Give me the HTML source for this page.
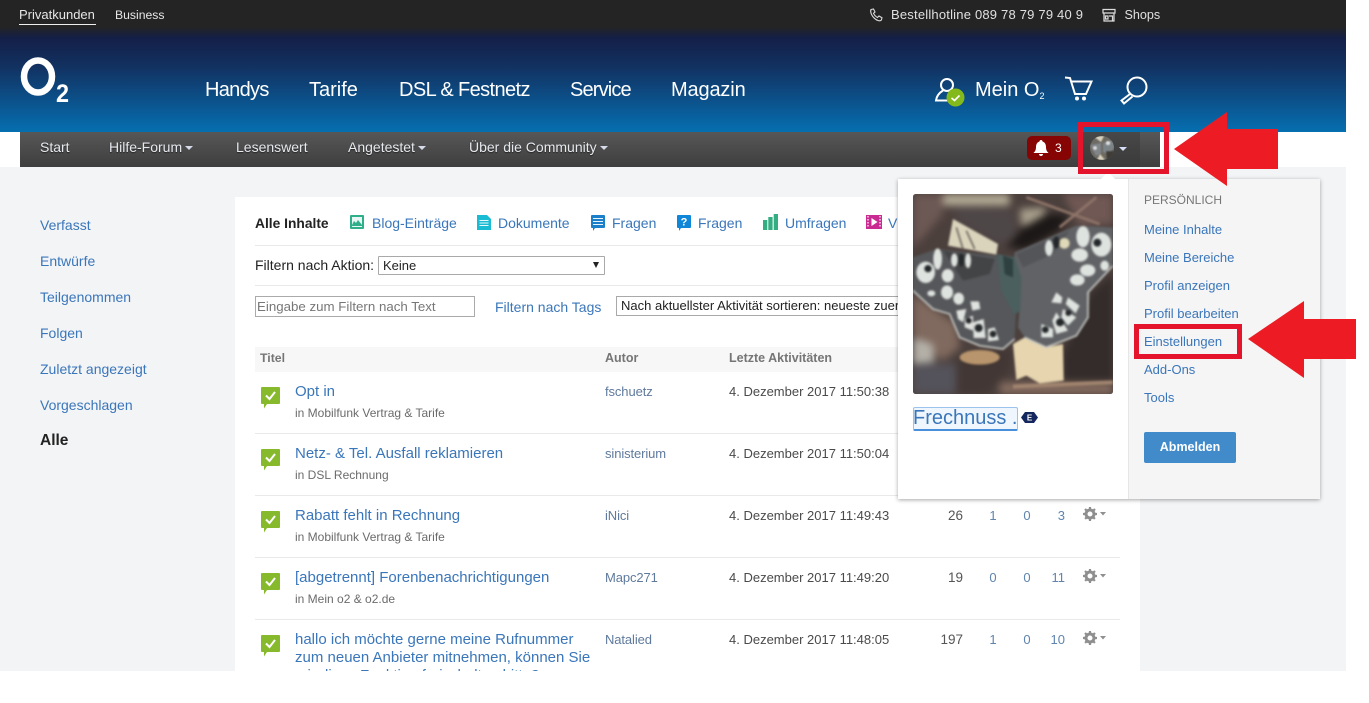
<!DOCTYPE html>
<html lang="de"><head><meta charset="utf-8"><title>O2 Community</title>
<style>
html,body{margin:0;padding:0;background:#fff}
body{position:relative;width:1369px;height:703px;overflow:hidden;font-family:"Liberation Sans",sans-serif}
.t{position:absolute;white-space:nowrap;line-height:20px;height:20px}
.a{position:absolute}
.l{color:#3a76ba}
.w{color:#fff}
.ti{font-size:15px;color:#3a76ba}
.sub{font-size:12px;color:#6b6b6b}
.au{font-size:13px;color:#5f7a9c;letter-spacing:-.1px}
.dt{font-size:13px;color:#4a4a4a}
.n{font-size:13.5px;color:#555;text-align:right;width:30px}
.n2{font-size:13px;color:#5f84ae;text-align:center;width:24px}
.n3{font-size:13px;color:#5f84ae;text-align:right;width:24px}
.hr{position:absolute;left:20px;width:865px;height:1px;background:#e9e9e9}
.m{font-size:13px;color:#3a76ba}
.s{font-size:14px;color:#e6e9ee;text-shadow:0 1px 1px #222}
.side{font-size:14px;color:#3a76ba}
.c{display:inline-block;width:0;height:0;border:4px solid transparent;border-top-color:#d5dbe8;border-bottom:0;margin-left:3px;vertical-align:2px}
svg{position:absolute;display:block;overflow:visible}
</style></head><body>

<!-- header -->
<div class="a" style="left:0;top:0;width:1346px;height:132px;background:linear-gradient(#242424 0,#242424 27px,#141f48 38px,#12305f 65px,#0a5a96 110px,#066fb0 132px)"></div>
<div class="t" style="left:19px;top:5px;font-size:13px;color:#e6e6e6">Privatkunden</div>
<div class="a" style="left:19px;top:24px;width:77px;height:1px;background:#eee"></div>
<div class="t" style="left:115px;top:5px;font-size:12.2px;color:#e6e6e6">Business</div>

<svg style="left:869px;top:8px" width="14" height="14" viewBox="0 0 14 14" fill="none" stroke="#ddd" stroke-width="1.1"><path d="M2 1.5 4.5 1 6 4 4.5 5.3C5.3 7 6.8 8.6 8.5 9.5L10 8l3 1.8-.6 2.2C11 13.5 8 12.8 5.3 10.2 2.5 7.5 1 4 2 1.500Z"/></svg>
<div class="t" style="left:891px;top:5px;font-size:13px;color:#e0e0e0;letter-spacing:.2px">Bestellhotline 089 78 79 79 40 9</div>
<svg style="left:1102px;top:8px" width="14" height="14" viewBox="0 0 14 14" fill="none" stroke="#ddd" stroke-width="1.2"><path d="M1 1.5h12v3.500H1zM2 5v8h10V5M7 8h3.500v5M3.500 8H6v3H3.500z"/></svg>
<div class="t" style="left:1124.5px;top:5px;font-size:12.6px;color:#e0e0e0">Shops</div>

<!-- logo -->
<svg style="left:20px;top:55px" width="52" height="50" viewBox="0 0 52 50"><ellipse cx="18" cy="21.5" rx="14" ry="16" fill="none" stroke="#fff" stroke-width="6.5"/><text x="36" y="47" font-family="Liberation Sans,sans-serif" font-size="25" font-weight="bold" fill="#fff" textLength="13" lengthAdjust="spacingAndGlyphs">2</text></svg>

<div class="t w" style="left:205px;top:80px;font-size:20px;letter-spacing:-.7px">Handys</div>
<div class="t w" style="left:309px;top:80px;font-size:20px">Tarife</div>
<div class="t w" style="left:399px;top:80px;font-size:20px;letter-spacing:-.6px">DSL &amp; Festnetz</div>
<div class="t w" style="left:570px;top:80px;font-size:20px;letter-spacing:-.85px">Service</div>
<div class="t w" style="left:671px;top:80px;font-size:20px;letter-spacing:-.15px">Magazin</div>

<svg style="left:935px;top:77px" width="30" height="32" viewBox="0 0 30 32" fill="none" stroke="#fff" stroke-width="2"><circle cx="12" cy="8" r="6"/><path d="M8 13.500C4 16 1.500 19.500 1 23.500h15"/><circle cx="20.500" cy="20.500" r="9" fill="#84b91c" stroke="none"/><path d="M16.500 21l3 2.500 5-5" stroke-width="1.600"/></svg>
<div class="t w" style="left:975px;top:80px;font-size:20px">Mein O<span style="font-size:9px;vertical-align:-3px">2</span></div>
<svg style="left:1065px;top:76px" width="28" height="26" viewBox="0 0 28 26" fill="none" stroke="#fff" stroke-width="2"><path d="M0 1.500 5 2 10 18H21L26.500 5.500H5.500"/><circle cx="12" cy="22.500" r="2" fill="#fff" stroke="none"/><circle cx="19" cy="22.500" r="2" fill="#fff" stroke="none"/></svg>
<svg style="left:1120px;top:76px" width="28" height="28" viewBox="0 0 28 28" fill="none" stroke="#fff" stroke-width="2"><circle cx="17" cy="11" r="9.500"/><path d="M10 18 1.500 24.500 4 27.500 12.500 20.500"/></svg>

<!-- subnav -->
<div class="a" style="left:20px;top:132px;width:1140px;height:35px;background:linear-gradient(#575757,#3e3e3e)"></div>
<div class="a" style="left:1079px;top:132px;width:61px;height:35px;background:linear-gradient(#484848,#3a3a3a)"></div>
<div class="t s" style="left:40px;top:137px">Start</div>
<div class="t s" style="left:109px;top:137px">Hilfe-Forum<i class="c"></i></div>
<div class="t s" style="left:236px;top:137px">Lesenswert</div>
<div class="t s" style="left:348px;top:137px">Angetestet<i class="c"></i></div>
<div class="t s" style="left:469px;top:137px">Über die Community<i class="c"></i></div>

<div class="a" style="left:1027px;top:136px;width:44px;height:24px;border-radius:5px;background:#860404"></div>
<svg style="left:1033px;top:140px" width="16" height="17" viewBox="0 0 16 17" fill="#fff"><path d="M8 0c1 0 1.500.7 1.500 1.500C12 2.300 13 4.500 13 7c0 3 1 4.500 2.500 6H.5C2 11.500 3 10 3 7c0-2.500 1-4.700 3.500-5.500C6.500.7 7 0 8 0ZM6 14h4c0 1.200-1 2-2 2s-2-.8-2-2Z"/></svg>
<div class="t" style="left:1055px;top:138px;font-size:12px;color:#fff">3</div>

<svg style="left:1090px;top:136px" width="24" height="24" viewBox="0 0 24 24"><defs><clipPath id="av"><circle cx="12" cy="12" r="12"/></clipPath><filter id="ab"><feGaussianBlur stdDeviation=".7"/></filter></defs><g clip-path="url(#av)"><rect width="24" height="24" fill="#6d6a63"/><g filter="url(#ab)"><path d="M0 9 11 7v10l-5 3z" fill="#80868a"/><path d="M13 7 24 4v8l-6 6-5-2z" fill="#7d8488"/><path d="M3 0h11l-3 6zM10 18l5 6H7z" fill="#d9d1bd"/><circle cx="18" cy="7" r="2" fill="#ddd"/><circle cx="5" cy="12" r="1.800" fill="#ddd"/><path d="M16 15h8v9h-7z" fill="#3f3a34"/></g></g></svg>
<div class="a" style="left:1119px;top:147px;width:0;height:0;border:4px solid transparent;border-top-color:#d5dff5;border-bottom:0"></div>

<!-- main area -->
<div class="a" style="left:0;top:167px;width:1346px;height:504px;background:#f3f4f6;overflow:hidden">
  <div class="t side" style="left:40px;top:48px">Verfasst</div>
  <div class="t side" style="left:40px;top:84px">Entwürfe</div>
  <div class="t side" style="left:40px;top:120px">Teilgenommen</div>
  <div class="t side" style="left:40px;top:156px">Folgen</div>
  <div class="t side" style="left:40px;top:192px">Zuletzt angezeigt</div>
  <div class="t side" style="left:40px;top:228px">Vorgeschlagen</div>
  <div class="t" style="left:40px;top:264px;font-size:15.5px;font-weight:bold;color:#222">Alle</div>

  <div class="a" style="left:235px;top:30px;width:905px;height:474px;background:#fff;overflow:hidden">
    <div class="t" style="left:20px;top:16px;font-size:13.8px;font-weight:bold;color:#222;margin-top:.5px">Alle Inhalte</div>

    <svg style="left:115px;top:18px" width="14" height="14" viewBox="0 0 14 14"><rect width="14" height="14" rx="1" fill="#2fae8a"/><rect x="2" y="2" width="10" height="8" fill="#e8f7f3"/><path d="M2 10 4 6l2 2 2-3 4 5z" fill="#2fae8a"/><rect x="2" y="11" width="10" height="1" fill="#e8f7f3"/></svg>
    <div class="t l" style="left:137px;top:16px;font-size:14px">Blog-Einträge</div>

    <svg style="left:242px;top:18px" width="14" height="15" viewBox="0 0 14 15"><path d="M0 0h10l4 4v11H0z" fill="#19bcd2"/><path d="M2.500 5.500h9M2.500 8h9M2.500 10.500h9" stroke="#e6fafd" stroke-width="1"/></svg>
    <div class="t l" style="left:263px;top:16px;font-size:14px">Dokumente</div>

    <svg style="left:356px;top:18px" width="14" height="16" viewBox="0 0 14 16"><path d="M1 0h12a1 1 0 0 1 1 1v11a1 1 0 0 1-1 1H4l-2 3v-3H1a1 1 0 0 1-1-1V1a1 1 0 0 1 1-1Z" fill="#1c7fc9"/><path d="M2 3.500h10M2 6.500h10M2 9.500h10" stroke="#eaf4fb" stroke-width="1"/></svg>
    <div class="t l" style="left:377px;top:16px;font-size:14px">Fragen</div>

    <svg style="left:442px;top:18px" width="14" height="16" viewBox="0 0 14 16"><path d="M1 0h12a1 1 0 0 1 1 1v11a1 1 0 0 1-1 1H4l-2 3v-3H1a1 1 0 0 1-1-1V1a1 1 0 0 1 1-1Z" fill="#0f86d8"/><text x="7" y="10.500" text-anchor="middle" font-family="Liberation Sans,sans-serif" font-size="11" font-weight="bold" fill="#fff">?</text></svg>
    <div class="t l" style="left:463px;top:16px;font-size:14px">Fragen</div>

    <svg style="left:528px;top:17px" width="15" height="16" viewBox="0 0 15 16" fill="#34ad82"><rect y="6" width="4.300" height="10"/><rect x="5.300" y="3" width="4.300" height="13"/><rect x="10.700" width="4.300" height="16"/></svg>
    <div class="t l" style="left:550px;top:16px;font-size:14px">Umfragen</div>

    <svg style="left:631px;top:18px" width="16" height="14" viewBox="0 0 16 14"><rect width="16" height="14" fill="#c92b93"/><path d="M5.500 3 11.500 7 5.500 11z" fill="#fff"/><path d="M2 1v12M14 1v12" stroke="#fff" stroke-width="1.200" stroke-dasharray="1.500 1.500"/></svg>
    <div class="t l" style="left:653px;top:16px;font-size:14px">Videos</div>

    <div class="hr" style="top:48px"></div>

    <div class="t" style="left:20px;top:58px;font-size:14px;color:#222">Filtern nach Aktion:</div>
    <div class="a" style="left:143px;top:59px;width:225px;height:17px;border:1px solid #a9a9a9;border-radius:1px;font-size:13px;line-height:18px;color:#222;text-indent:4px">Keine</div>
    <div class="a" style="left:358px;top:65px;width:0;height:0;border:3px solid transparent;border-top:6px solid #222;border-bottom:0"></div>

    <div class="hr" style="top:88px"></div>

    <div class="a" style="left:20px;top:99px;width:218px;height:19px;border:1px solid #aaa;font-size:13.3px;line-height:19px;color:#777;text-indent:1px;white-space:nowrap">Eingabe zum Filtern nach Text</div>
    <div class="t l" style="left:260px;top:100px;font-size:14px">Filtern nach Tags</div>
    <div class="a" style="left:381px;top:99px;width:600px;height:18px;border:1px solid #a9a9a9;font-size:13px;line-height:18px;color:#222;text-indent:4px;white-space:nowrap">Nach aktuellster Aktivität sortieren: neueste zuerst</div>

    <!-- table head -->
    <div class="a" style="left:20px;top:150px;width:865px;height:25px;background:#f7f7f7"></div>
    <div class="t" style="left:25px;top:151px;font-size:12.3px;font-weight:bold;color:#757575">Titel</div>
    <div class="t" style="left:370px;top:151px;font-size:12.5px;font-weight:bold;color:#757575">Autor</div>
    <div class="t" style="left:494px;top:151px;font-size:12.5px;font-weight:bold;color:#757575">Letzte Aktivitäten</div>

    <!-- row 1 -->
    <svg style="left:26px;top:190px" width="19" height="22" viewBox="0 0 19 22"><path d="M1 0h17a1 1 0 0 1 1 1v15a1 1 0 0 1-1 1H6l-3 4.500V17H1a1 1 0 0 1-1-1V1a1 1 0 0 1 1-1Z" fill="#86ba2c"/><path d="M5 8.500l3.500 3.500 5.500-7" stroke="#fff" stroke-width="2" fill="none"/></svg>
    <div class="t ti" style="left:60px;top:185px">Opt in</div>
    <div class="t sub" style="left:60px;top:206px">in Mobilfunk Vertrag &amp; Tarife</div>
    <div class="t au" style="left:370px;top:185px">fschuetz</div>
    <div class="t dt" style="left:494px;top:185px">4. Dezember 2017 11:50:38</div>
    <div class="hr" style="top:236px"></div>

    <!-- row 2 -->
    <svg style="left:26px;top:252px" width="19" height="22" viewBox="0 0 19 22"><path d="M1 0h17a1 1 0 0 1 1 1v15a1 1 0 0 1-1 1H6l-3 4.500V17H1a1 1 0 0 1-1-1V1a1 1 0 0 1 1-1Z" fill="#86ba2c"/><path d="M5 8.500l3.500 3.500 5.500-7" stroke="#fff" stroke-width="2" fill="none"/></svg>
    <div class="t ti" style="left:60px;top:247px">Netz- &amp; Tel. Ausfall reklamieren</div>
    <div class="t sub" style="left:60px;top:268px">in DSL Rechnung</div>
    <div class="t au" style="left:370px;top:247px">sinisterium</div>
    <div class="t dt" style="left:494px;top:247px">4. Dezember 2017 11:50:04</div>
    <div class="hr" style="top:298px"></div>

    <!-- row 3 -->
    <svg style="left:26px;top:314px" width="19" height="22" viewBox="0 0 19 22"><path d="M1 0h17a1 1 0 0 1 1 1v15a1 1 0 0 1-1 1H6l-3 4.500V17H1a1 1 0 0 1-1-1V1a1 1 0 0 1 1-1Z" fill="#86ba2c"/><path d="M5 8.500l3.500 3.500 5.500-7" stroke="#fff" stroke-width="2" fill="none"/></svg>
    <div class="t ti" style="left:60px;top:309px">Rabatt fehlt in Rechnung</div>
    <div class="t sub" style="left:60px;top:330px">in Mobilfunk Vertrag &amp; Tarife</div>
    <div class="t au" style="left:370px;top:309px">iNici</div>
    <div class="t dt" style="left:494px;top:309px">4. Dezember 2017 11:49:43</div>
    <div class="t n" style="left:698px;top:309px">26</div>
    <div class="t n2" style="left:746px;top:309px">1</div>
    <div class="t n2" style="left:780px;top:309px">0</div>
    <div class="t n3" style="left:806px;top:309px">3</div>
    <svg style="left:848px;top:310px" width="24" height="14" viewBox="0 0 24 14"><circle cx="7" cy="7" r="4" fill="none" stroke="#8f8f8f" stroke-width="3"/><path d="M7 0v14M0 7h14M2 2l10 10M12 2 2 12" stroke="#8f8f8f" stroke-width="2.200" stroke-dasharray="2.600 8.800"/><path d="M17 5h6l-3 3.500z" fill="#8f8f8f"/></svg>
    <div class="hr" style="top:360px"></div>

    <!-- row 4 -->
    <svg style="left:26px;top:376px" width="19" height="22" viewBox="0 0 19 22"><path d="M1 0h17a1 1 0 0 1 1 1v15a1 1 0 0 1-1 1H6l-3 4.500V17H1a1 1 0 0 1-1-1V1a1 1 0 0 1 1-1Z" fill="#86ba2c"/><path d="M5 8.500l3.500 3.500 5.500-7" stroke="#fff" stroke-width="2" fill="none"/></svg>
    <div class="t ti" style="left:60px;top:371px">[abgetrennt] Forenbenachrichtigungen</div>
    <div class="t sub" style="left:60px;top:392px">in Mein o2 &amp; o2.de</div>
    <div class="t au" style="left:370px;top:371px">Mapc271</div>
    <div class="t dt" style="left:494px;top:371px">4. Dezember 2017 11:49:20</div>
    <div class="t n" style="left:698px;top:371px">19</div>
    <div class="t n2" style="left:746px;top:371px">0</div>
    <div class="t n2" style="left:780px;top:371px">0</div>
    <div class="t n3" style="left:806px;top:371px">11</div>
    <svg style="left:848px;top:372px" width="24" height="14" viewBox="0 0 24 14"><circle cx="7" cy="7" r="4" fill="none" stroke="#8f8f8f" stroke-width="3"/><path d="M7 0v14M0 7h14M2 2l10 10M12 2 2 12" stroke="#8f8f8f" stroke-width="2.200" stroke-dasharray="2.600 8.800"/><path d="M17 5h6l-3 3.500z" fill="#8f8f8f"/></svg>
    <div class="hr" style="top:422px"></div>

    <!-- row 5 -->
    <svg style="left:26px;top:438px" width="19" height="22" viewBox="0 0 19 22"><path d="M1 0h17a1 1 0 0 1 1 1v15a1 1 0 0 1-1 1H6l-3 4.500V17H1a1 1 0 0 1-1-1V1a1 1 0 0 1 1-1Z" fill="#86ba2c"/><path d="M5 8.500l3.500 3.500 5.500-7" stroke="#fff" stroke-width="2" fill="none"/></svg>
    <div class="t ti" style="left:60px;top:433px">hallo ich möchte gerne meine Rufnummer</div>
    <div class="t ti" style="left:60px;top:451px">zum neuen Anbieter mitnehmen, können Sie</div>
    <div class="t ti" style="left:60px;top:469px">mir diese Funktion freischalten bitte?</div>
    <div class="t au" style="left:370px;top:433px">Natalied</div>
    <div class="t dt" style="left:494px;top:433px">4. Dezember 2017 11:48:05</div>
    <div class="t n" style="left:698px;top:433px">197</div>
    <div class="t n2" style="left:746px;top:433px">1</div>
    <div class="t n2" style="left:780px;top:433px">0</div>
    <div class="t n3" style="left:806px;top:433px">10</div>
    <svg style="left:848px;top:434px" width="24" height="14" viewBox="0 0 24 14"><circle cx="7" cy="7" r="4" fill="none" stroke="#8f8f8f" stroke-width="3"/><path d="M7 0v14M0 7h14M2 2l10 10M12 2 2 12" stroke="#8f8f8f" stroke-width="2.200" stroke-dasharray="2.600 8.800"/><path d="M17 5h6l-3 3.500z" fill="#8f8f8f"/></svg>
  </div>
</div>

<!-- dropdown -->
<div class="a" style="left:898px;top:179px;width:422px;height:320px;background:#fff;box-shadow:0 1px 4px rgba(0,0,0,.35)"></div>
<div class="a" style="left:1128px;top:179px;width:192px;height:320px;background:#f5f5f5;border-left:1px solid #e6e6e6;box-sizing:border-box"></div>
<div class="a" style="left:1100px;top:172px;width:0;height:0;border:8px solid transparent;border-bottom-color:#fff;border-top:0"></div>

<svg style="left:913px;top:194px" width="200" height="200" viewBox="0 0 600 600">
  <defs>
    <filter id="b1" x="-5%" y="-5%" width="110%" height="110%" color-interpolation-filters="sRGB"><feGaussianBlur stdDeviation="3.500"/></filter>
    <filter id="b2" x="-10%" y="-10%" width="120%" height="120%" color-interpolation-filters="sRGB"><feGaussianBlur stdDeviation="12"/></filter>
    <clipPath id="im"><rect width="600" height="600" rx="8"/></clipPath>
  </defs>
  <g clip-path="url(#im)">
    <rect width="600" height="600" fill="#4c403d"/>
    <g filter="url(#b2)">
      <path d="M0 0H90V60L30 130 0 160Z" fill="#6c5854"/>
      <path d="M90 0H290V35H90Z" fill="#b4ab96"/>
      <path d="M130 40 300 50 310 130 260 150 130 80Z" fill="#4e4748"/>
      <path d="M320 45 395 40 400 95 325 95Z" fill="#a89f8c"/>
      <path d="M400 60H470L440 110 340 165 280 160 330 100Z" fill="#1c1817"/>
      <path d="M450 0H600V90L500 95Z" fill="#705854"/>
      <path d="M0 300 130 390 140 460 90 500 0 420Z" fill="#80695e"/>
      <path d="M0 430 60 450 65 505 0 510Z" fill="#b4b0a8"/>
      <path d="M0 510H130L200 600H0Z" fill="#54525a"/>
      <path d="M130 500 300 460 290 530 220 600H130Z" fill="#423734"/>
      <path d="M450 480 530 300 600 240V600H450Z" fill="#332c2a"/>
      <path d="M260 565H600V600H260Z" fill="#866c60"/>
    </g>
    <g filter="url(#b1)">
      <path d="M105 155 120 75 255 150 250 182Z" fill="#dbd4bc"/>
      <path d="M130 100 150 165 M160 110 185 165" stroke="#6b675e" stroke-width="5"/>
      <path d="M300 450 335 430 400 460 450 450 452 560 380 568 340 545 310 558Z" fill="#e6d5ae"/>
      <ellipse cx="200" cy="490" rx="60" ry="22" fill="#b8956c"/>
      <path d="M300 578 600 565" stroke="#a0846f" stroke-width="12"/>
      <path d="M340 10 560 90M440 100 550 10" stroke="#8f7569" stroke-width="8"/>

      <path d="M0 190 70 165 250 185 262 200 310 340 305 435 270 465 200 455 140 430 110 360 60 345 0 290Z" fill="#55575a"/>
      <path d="M305 175 490 95 600 100 600 210 530 290 525 370 490 425 400 460 335 430 315 400 320 340 300 230Z" fill="#606265"/>
      <path d="M90 170 245 195 230 240 150 260Z" fill="#434446"/>
      <path d="M310 180 470 110 420 180 330 220Z" fill="#535558"/>
      <path d="M252 180 305 190 325 250 322 350 305 362 265 290Z" fill="#4b5f5f"/>
      <path d="M270 185 300 195 300 250 275 240Z" fill="#2e403f"/>

      <path d="M0 290 60 345 110 360 140 430 200 455 270 465 305 435" fill="none" stroke="#c8c9c5" stroke-width="5"/>
      <path d="M335 430 400 460 490 425 525 370 525 295 600 215" fill="none" stroke="#c8c9c5" stroke-width="5"/>

      <g fill="#dfe3df">
        <ellipse cx="74" cy="195" rx="13" ry="32"/>
        <ellipse cx="38" cy="235" rx="28" ry="32"/>
        <ellipse cx="104" cy="245" rx="18" ry="20"/>
        <ellipse cx="102" cy="295" rx="18" ry="21"/>
        <ellipse cx="137" cy="314" rx="16" ry="18"/>
        <path d="M172 322 198 322 202 345 178 350Z"/>
        <path d="M130 350 160 345 150 385 135 375Z"/>
        <ellipse cx="124" cy="198" rx="10" ry="20"/>
        <ellipse cx="165" cy="200" rx="9" ry="22"/>
        <ellipse cx="55" cy="298" rx="12" ry="9"/>
        <path d="M155 375 180 365 180 410 155 400Z"/>
        <path d="M180 385 212 375 218 432 182 432Z"/>
        <path d="M225 405 245 400 258 438 225 442Z"/>
        <ellipse cx="510" cy="128" rx="20" ry="32"/>
        <ellipse cx="565" cy="152" rx="30" ry="36"/>
        <ellipse cx="500" cy="183" rx="25" ry="20"/>
        <ellipse cx="524" cy="229" rx="23" ry="18"/>
        <ellipse cx="493" cy="258" rx="22" ry="17"/>
        <ellipse cx="575" cy="215" rx="13" ry="15"/>
        <ellipse cx="408" cy="162" rx="12" ry="24"/>
        <ellipse cx="454" cy="148" rx="16" ry="16" fill="#e0d9b8"/>
        <path d="M430 295 448 310 445 328 415 325Z"/>
        <path d="M465 310 500 335 488 358 458 330Z"/>
        <path d="M450 345 490 370 465 395 445 370Z"/>
        <path d="M430 355 465 410 430 420 418 380Z"/>
        <path d="M385 390 420 405 420 430 385 430Z"/>
      </g>
      <g fill="#25282a">
        <circle cx="45" cy="224" r="11"/><circle cx="553" cy="146" r="12"/>
        <circle cx="167" cy="380" r="9"/><circle cx="197" cy="402" r="12"/><circle cx="240" cy="420" r="10"/>
        <circle cx="466" cy="357" r="9"/><circle cx="441" cy="385" r="12"/><circle cx="397" cy="407" r="10"/>
        <ellipse cx="430" cy="145" rx="10" ry="18"/><ellipse cx="145" cy="198" rx="8" ry="20"/>
      </g>
    </g>
  </g>
</svg>

<div class="a" style="left:913px;top:407px;width:103px;height:21px;border:1px solid #9cc2ee;border-bottom:2px solid #4a8fdb;border-radius:2px;background:#f0f6fd"></div>
<div class="t" style="left:913px;top:408px;font-size:20px;color:#3a76ba">Frechnuss .</div>
<svg style="left:1021px;top:412px" width="17" height="11" viewBox="0 0 17 11"><path d="M0 5.500 4 0h9l4 5.500L13 11H4z" fill="#14275e"/><text x="8.500" y="8.500" text-anchor="middle" font-family="Liberation Sans,sans-serif" font-size="8" font-weight="bold" fill="#fff">E</text></svg>

<div class="t" style="left:1144px;top:190px;font-size:12px;color:#777">PERSÖNLICH</div>
<div class="t m" style="left:1144px;top:220px">Meine Inhalte</div>
<div class="t m" style="left:1144px;top:248px">Meine Bereiche</div>
<div class="t m" style="left:1144px;top:276px">Profil anzeigen</div>
<div class="t m" style="left:1144px;top:304px">Profil bearbeiten</div>
<div class="t m" style="left:1144px;top:332px">Einstellungen</div>
<div class="t m" style="left:1144px;top:360px">Add-Ons</div>
<div class="t m" style="left:1144px;top:388px">Tools</div>
<div class="a" style="left:1144px;top:432px;width:92px;height:31px;background:#428bcb;border-radius:2px;color:#fff;font-size:12.5px;font-weight:bold;text-align:center;line-height:31px">Abmelden</div>

<!-- annotations -->
<div class="a" style="left:1078px;top:122px;width:81px;height:42px;border:5px solid #e4142c"></div>
<div class="a" style="left:1134px;top:324px;width:98px;height:25px;border:5px solid #e4142c"></div>
<svg style="left:0;top:0" width="1369" height="703" viewBox="0 0 1369 703"><path d="M1174 149 1227 112V129H1278V169H1227V186Z" fill="#ed1c24"/><path d="M1248 339 1304 301V319H1356V359H1304V378Z" fill="#ed1c24"/></svg>

</body></html>
